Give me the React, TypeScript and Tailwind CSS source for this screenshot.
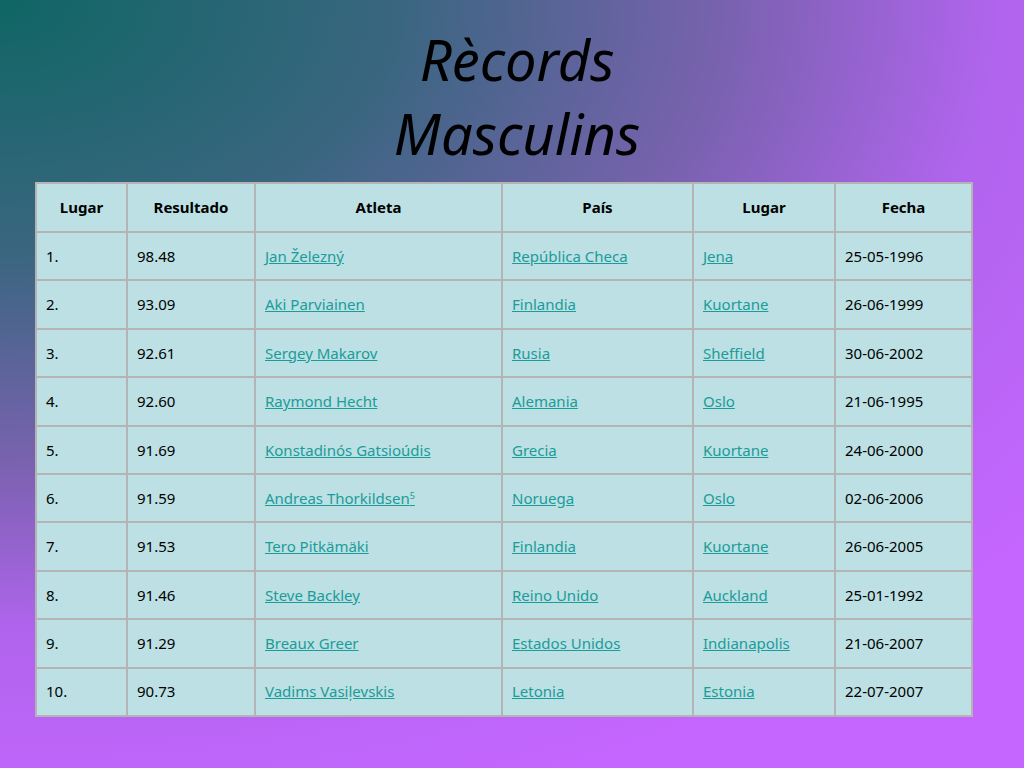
const rows = [
  ["1.", "98.48", "Jan Železný", "República Checa", "Jena", "25-05-1996"],
  ["2.", "93.09", "Aki Parviainen", "Finlandia", "Kuortane", "26-06-1999"],
  ["3.", "92.61", "Sergey Makarov", "Rusia", "Sheffield", "30-06-2002"],
  ["4.", "92.60", "Raymond Hecht", "Alemania", "Oslo", "21-06-1995"],
  ["5.", "91.69", "Konstadinós Gatsioúdis", "Grecia", "Kuortane", "24-06-2000"],
  ["6.", "91.59", "Andreas Thorkildsen", "Noruega", "Oslo", "02-06-2006"],
  ["7.", "91.53", "Tero Pitkämäki", "Finlandia", "Kuortane", "26-06-2005"],
  ["8.", "91.46", "Steve Backley", "Reino Unido", "Auckland", "25-01-1992"],
  ["9.", "91.29", "Breaux Greer", "Estados Unidos", "Indianapolis", "21-06-2007"],
  ["10.", "90.73", "Vadims Vasiļevskis", "Letonia", "Estonia", "22-07-2007"],
];

const headers = ["Lugar", "Resultado", "Atleta", "País", "Lugar", "Fecha"];
const widths = ["w-[91px]", "w-[128px]", "w-[247px]", "w-[191px]", "w-[142px]", "w-[137px]"];

export default function App() {
  return (
    <div className="w-[1024px] h-[768px] overflow-hidden bg-[radial-gradient(ellipse_130%_110%_at_0%_0%,#0f6664_0%,#3a6680_30%,#7a62b0_55%,#b164ee_75%,#c466ff_100%)] font-[family-name:'Liberation_Serif',serif] flex flex-col items-center">
      <h1 className="mt-[22px] ml-[10px] text-center italic text-[56px] leading-[74px] text-black">
        Rècords
        <br />
        Masculins
      </h1>
      <table className="mt-[12px] ml-[-16px] border-collapse border-2 border-[#b4b4b4] bg-[#bce0e3] text-[15px] text-black">
        <thead>
          <tr className="h-[49px]">
            {headers.map((h, i) => (
              <th key={i} className={`${widths[i]} border-2 border-[#b4b4b4] font-bold text-center`}>
                {h}
              </th>
            ))}
          </tr>
        </thead>
        <tbody>
          {rows.map((r) => (
            <tr key={r[0]} className="h-[48.4px]">
              {r.map((c, i) => (
                <td key={i} className="border-2 border-[#b4b4b4] px-[9px]">
                  {i >= 2 && i <= 4 ? (
                    <span className="text-[#1a9c9a] underline">
                      {c}
                      {c === "Andreas Thorkildsen" && <sup className="text-[9px]">5</sup>}
                    </span>
                  ) : (
                    c
                  )}
                </td>
              ))}
            </tr>
          ))}
        </tbody>
      </table>
    </div>
  );
}
